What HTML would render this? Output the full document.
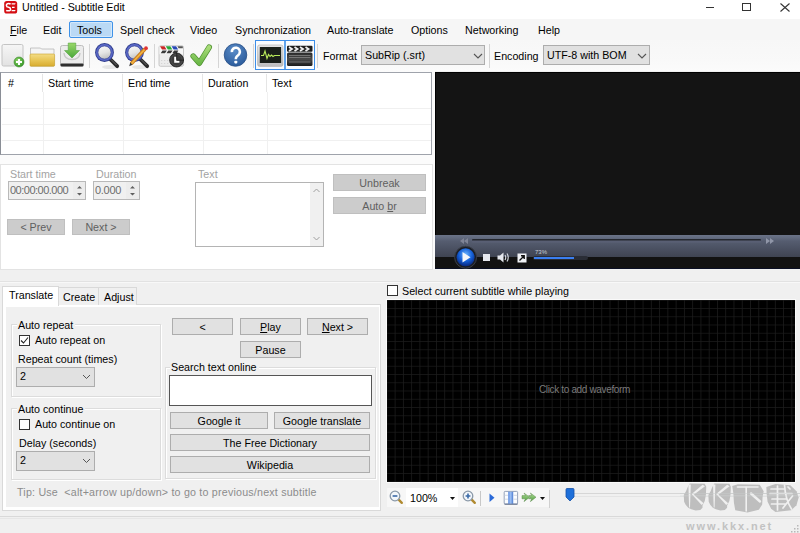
<!DOCTYPE html>
<html><head><meta charset="utf-8">
<style>
*{box-sizing:border-box;margin:0;padding:0}
html,body{width:800px;height:533px;overflow:hidden;background:#f0f0f0;font-family:"Liberation Sans",sans-serif;font-size:10.7px;color:#000}
.a{position:absolute}
.t{position:absolute;white-space:nowrap;line-height:12px}
.btn{position:absolute;background:#e1e1e1;border:1px solid #adadad;text-align:center;line-height:16px;white-space:nowrap}
.dbtn{position:absolute;background:#cccccc;border:1px solid #bfbfbf;text-align:center;color:#5f5f5f;line-height:15px;white-space:nowrap}
.grp{position:absolute;border:1px solid #dcdcdc;box-shadow:inset 1px 1px 0 #fff,1px 1px 0 #fff}
.gt{position:absolute;background:#f0f0f0;padding:0 2px 0 1px;white-space:nowrap;line-height:12px}
.sep{position:absolute;width:1px;background:#d5d5d5}
.cb{position:absolute;width:11px;height:11px;border:1px solid #333;background:#fff}
.combo{position:absolute;background:#e1e1e1;border:1px solid #adadad;line-height:17px;padding-left:3px;white-space:nowrap}
u{text-decoration:underline}
</style></head><body>
<!-- title bar -->
<div class="a" style="left:0;top:0;width:800px;height:19px;background:#fff"></div>
<svg class="a" style="left:0;top:0" width="20" height="16"><rect x="4.2" y="1" width="13" height="12.6" rx="2.6" fill="#d50f14"/><path d="M10.6 4.2Q10 3.5 8.6 3.5Q6.4 3.5 6.4 5.4Q6.4 7 8.5 7.3Q10.6 7.6 10.6 9.2Q10.6 10.8 8.2 10.8Q6.8 10.8 6.2 10.4" stroke="#fff" stroke-width="1.5" fill="none"/><path d="M11.6 3.3H15.6L15 4.5H11.6Z M12 6.7H14.6V7.9H12Z M11.6 10H15.6L15 11.2H11.6Z" fill="#fff"/></svg>
<div class="t" style="left:22px;top:1px">Untitled - Subtitle Edit</div>
<div class="a" style="left:706px;top:7px;width:8px;height:1px;background:#333"></div>
<div class="a" style="left:742px;top:3px;width:9px;height:8px;border:1px solid #333"></div>
<svg class="a" style="left:780px;top:3px" width="10" height="9"><path d="M0.5 0.5L9.5 8.5M9.5 0.5L0.5 8.5" stroke="#333" stroke-width="1.1"/></svg>

<!-- menu bar -->
<div class="a" style="left:0;top:19px;width:800px;height:21px;background:#f6f6f6"></div>
<div class="a" style="left:69px;top:21px;width:44px;height:17px;background:#bad9f5;border:1px solid #3f92e8;border-radius:2px;box-shadow:inset 0 0 0 1px #d4e8fa"></div>
<div class="t" style="left:10px;top:24px"><u>F</u>ile</div>
<div class="t" style="left:43px;top:24px">Edit</div>
<div class="t" style="left:77px;top:24px">Tools</div>
<div class="t" style="left:120px;top:24px">Spell check</div>
<div class="t" style="left:190px;top:24px">Video</div>
<div class="t" style="left:235px;top:24px">Synchronization</div>
<div class="t" style="left:327px;top:24px">Auto-translate</div>
<div class="t" style="left:411px;top:24px">Options</div>
<div class="t" style="left:465px;top:24px">Networking</div>
<div class="t" style="left:538px;top:24px">Help</div>

<!-- toolbar -->
<div class="a" style="left:0;top:40px;width:800px;height:31px;background:linear-gradient(#f7f7f7,#f9f9f9 70%,#fbfbfb)"></div>
<div class="a" style="left:0;top:71px;width:435px;height:198px;background:#fbfbfb"></div>
<div id="icons">
<svg class="a" style="left:0;top:40px" width="320" height="31">
<defs>
<linearGradient id="lens" x1="0" y1="0" x2="0.3" y2="1"><stop offset="0" stop-color="#fafafa"/><stop offset="0.6" stop-color="#e4e4e4"/><stop offset="1" stop-color="#c4c4c4"/></linearGradient>
<linearGradient id="pg" x1="0" y1="0" x2="0" y2="1"><stop offset="0" stop-color="#f6f6f6"/><stop offset="1" stop-color="#e2e2e2"/></linearGradient>
<radialGradient id="gc" cx="40%" cy="35%" r="65%"><stop offset="0" stop-color="#8ed46a"/><stop offset="1" stop-color="#3a9a2a"/></radialGradient>
<linearGradient id="fy" x1="0" y1="0" x2="0" y2="1"><stop offset="0" stop-color="#f3dc86"/><stop offset="0.5" stop-color="#e8c656"/><stop offset="1" stop-color="#d8ac30"/></linearGradient>
<linearGradient id="ga" x1="0" y1="0" x2="0" y2="1"><stop offset="0" stop-color="#9ad86a"/><stop offset="1" stop-color="#4aa83a"/></linearGradient>
<linearGradient id="gk" x1="0" y1="0" x2="0" y2="1"><stop offset="0" stop-color="#a8dc78"/><stop offset="1" stop-color="#6cb848"/></linearGradient>
<radialGradient id="hb" cx="45%" cy="30%" r="70%"><stop offset="0" stop-color="#5a8cc8"/><stop offset="1" stop-color="#2c5c9c"/></radialGradient>
<linearGradient id="mf" x1="0" y1="0" x2="0" y2="1"><stop offset="0" stop-color="#e6e6e6"/><stop offset="1" stop-color="#bdbdbd"/></linearGradient>
<linearGradient id="cb2" x1="0" y1="0" x2="0" y2="1"><stop offset="0" stop-color="#2a2a2a"/><stop offset="0.5" stop-color="#4a4a4a"/><stop offset="1" stop-color="#1a1a1a"/></linearGradient>
</defs>
<!-- new -->
<rect x="2" y="4.5" width="21" height="21.5" rx="1.5" fill="url(#pg)" stroke="#c4c4c4"/>
<circle cx="19" cy="22" r="5" fill="url(#gc)" stroke="#3a8a2a" stroke-width="0.6"/>
<path d="M19 19V25M16 22H22" stroke="#fff" stroke-width="2"/>
<!-- open -->
<path d="M30.5 26V8H40.5L41.5 9H54V26Z" fill="#f4f4f4" stroke="#b8b8b8" stroke-width="0.8"/>
<rect x="30" y="14" width="24.6" height="12.2" rx="1" fill="url(#fy)" stroke="#c9a22a" stroke-width="0.6"/>
<!-- save -->
<rect x="60.5" y="5.5" width="23" height="20.5" rx="2" fill="#ececec" stroke="#bdbdbd"/>
<path d="M64 13Q64.5 19.5 72 19.5Q79.5 19.5 80 13" stroke="#c8c8c8" stroke-width="1.5" fill="none"/>
<rect x="60.5" y="23.5" width="23" height="3" rx="1" fill="#2f2f2f"/>
<path d="M68.2 3H75.8V10.5H79.5L72 18L64.5 10.5H68.2Z" fill="url(#ga)" stroke="#4a9a3a" stroke-width="0.5"/>
<!-- find -->
<ellipse cx="110" cy="27" rx="8" ry="2" fill="#000" opacity="0.08"/>
<path d="M110.5 19.5L117.2 26.2" stroke="#2a2a2a" stroke-width="3.8" stroke-linecap="round"/>
<path d="M111 19.5L116.5 25" stroke="#6a6a6a" stroke-width="1"/>
<circle cx="104.5" cy="12.5" r="9.4" fill="#2e3c8c"/>
<circle cx="104.5" cy="12.5" r="8.5" fill="#5b69c9"/>
<circle cx="104.5" cy="12.5" r="6.6" fill="url(#lens)" stroke="#3a4898" stroke-width="0.8"/>
<!-- replace -->
<ellipse cx="140" cy="27" rx="8" ry="2" fill="#000" opacity="0.08"/>
<path d="M140.5 19.5L147.2 26.2" stroke="#2a2a2a" stroke-width="3.8" stroke-linecap="round"/>
<path d="M141 19.5L146.5 25" stroke="#6a6a6a" stroke-width="1"/>
<circle cx="134.5" cy="12.5" r="9.4" fill="#2e3c8c"/>
<circle cx="134.5" cy="12.5" r="8.5" fill="#5b69c9"/>
<circle cx="134.5" cy="12.5" r="6.6" fill="url(#lens)" stroke="#3a4898" stroke-width="0.8"/>
<path d="M131.2 23.8L145 9" stroke="#c87818" stroke-width="3.6"/>
<path d="M131.2 23.8L145 9" stroke="#f2b443" stroke-width="1.8"/>
<path d="M129.2 26.2L130.2 22.4L132.6 24.8Z" fill="#3a3a3a"/>
<circle cx="146" cy="8.2" r="1.9" fill="#e03434"/>
<!-- clapper clock -->
<rect x="159" y="5.8" width="24.5" height="20.5" rx="1.5" fill="#ececec" stroke="#bdbdbd" stroke-width="0.8"/>
<rect x="159.5" y="6.2" width="23.5" height="8" fill="#f8f8f8"/>
<path d="M160 6.3H164.5L166.5 9.4H162Z" fill="#c82828"/>
<path d="M165.8 6.3H170.3L172.3 9.4H167.8Z" fill="#28a838"/>
<path d="M171.6 6.3H176.1L178.1 9.4H173.6Z" fill="#2848b8"/>
<path d="M177.4 6.3H182.8V8.2H178.6Z" fill="#555"/>
<path d="M162.5 10.6H166.8L165 13.2H160.7Z M168.3 10.6H172.6L170.8 13.2H166.5Z M174.1 10.6H178.4L176.6 13.2H172.3Z" fill="#3a3a3a"/>
<path d="M161 20.5H173M161 23.5H172" stroke="#cfcfcf" stroke-width="0.8" stroke-dasharray="1.2 1.8"/>
<circle cx="176.6" cy="20" r="7" fill="#3c3c3c" stroke="#222" stroke-width="0.8"/>
<circle cx="176.6" cy="20" r="5.6" fill="none" stroke="#555" stroke-width="0.6"/>
<path d="M175.2 16.8V21.8H179.4" stroke="#fff" stroke-width="2" fill="none"/>
<path d="M176.8 12.5V19.5M177 20.2H184" stroke="#1a1a1a" stroke-width="0.7"/>
<!-- check -->
<path d="M193.2 16.2L199.3 23.2L209.2 7.2" stroke="#4e9030" stroke-width="5.6" stroke-linecap="round" stroke-linejoin="round" fill="none"/>
<path d="M193.2 16.2L199.3 23.2L209.2 7.2" stroke="url(#gk)" stroke-width="4.2" stroke-linecap="round" stroke-linejoin="round" fill="none"/>
<!-- help -->
<circle cx="235.5" cy="15" r="11.3" fill="url(#hb)" stroke="#2a5088" stroke-width="0.8"/>
<path d="M231.9 12.2A4 4 0 1 1 239.4 13.6Q238.6 15 237 16.2Q235.8 17.2 235.8 19.3" stroke="#fff" stroke-width="2.6" fill="none"/><rect x="234.3" y="20.8" width="3" height="2.6" rx="0.8" fill="#fff"/>
<!-- waveform/video buttons -->
<rect x="255.5" y="0.5" width="59" height="29" fill="#fafcfe" stroke="#3d8ee8"/>
<path d="M285 1V29" stroke="#3d8ee8" stroke-width="1.6"/>
<rect x="257.5" y="5" width="25.5" height="21.4" rx="2" fill="url(#mf)" stroke="#b0b0b0" stroke-width="0.6"/>
<rect x="259.8" y="7" width="21.3" height="16" fill="#1a201a"/>
<path d="M261 15.5H263.5L265 11L267 18.5L268.5 14.5L270 16.5L271.5 15L273 16.5L274.5 15.5H280" stroke="#b8ea5a" stroke-width="1.1" fill="none"/>
<rect x="287" y="12.5" width="25.5" height="13.5" rx="1.5" fill="url(#cb2)"/>
<path d="M289 15.5H310.5M289 17.5H310.5M289 22H310.5" stroke="#9a9a9a" stroke-width="0.6"/>
<rect x="287" y="5.8" width="25.5" height="6" rx="1" fill="#1e1e1e"/>
<path d="M289 7L292 9L289 11 M294.5 7L297.5 9L294.5 11 M300 7L303 9L300 11 M305.5 7L308.5 9L305.5 11" stroke="#f0f0f0" stroke-width="1.8" fill="none"/>
</svg>
</div>
<div class="sep" style="left:89px;top:44px;height:24px"></div>
<div class="sep" style="left:154px;top:44px;height:24px"></div>
<div class="sep" style="left:218px;top:44px;height:24px"></div>
<div class="sep" style="left:253px;top:44px;height:24px"></div>
<div class="sep" style="left:317px;top:44px;height:24px"></div>
<div class="sep" style="left:489px;top:44px;height:24px"></div>
<div class="t" style="left:323px;top:50px">Format</div>
<div class="combo" style="left:361px;top:45px;width:124px;height:20px;line-height:19px">SubRip (.srt)</div>
<svg class="a" style="left:473px;top:53px" width="10" height="6"><path d="M1 1L5 5L9 1" stroke="#555" fill="none" stroke-width="1.1"/></svg>
<div class="t" style="left:494px;top:50px">Encoding</div>
<div class="combo" style="left:543px;top:45px;width:107px;height:20px;line-height:19px">UTF-8 with BOM</div>
<svg class="a" style="left:637px;top:53px" width="10" height="6"><path d="M1 1L5 5L9 1" stroke="#555" fill="none" stroke-width="1.1"/></svg>

<!-- list view -->
<div class="a" style="left:0;top:72px;width:432px;height:83px;background:#fff;border:1px solid #9fa3ab;border-left:1px solid #8a8e96"></div>
<div class="a" style="left:42px;top:74px;width:1px;height:18px;background:#e5e5e5"></div>
<div class="a" style="left:122px;top:74px;width:1px;height:18px;background:#e5e5e5"></div>
<div class="a" style="left:202px;top:74px;width:1px;height:18px;background:#e5e5e5"></div>
<div class="a" style="left:266px;top:74px;width:1px;height:18px;background:#e5e5e5"></div>
<div class="a" style="left:43px;top:92px;width:1px;height:62px;background:#f0f0f0"></div>
<div class="a" style="left:123px;top:92px;width:1px;height:62px;background:#f0f0f0"></div>
<div class="a" style="left:203px;top:92px;width:1px;height:62px;background:#f0f0f0"></div>
<div class="a" style="left:267px;top:92px;width:1px;height:62px;background:#f0f0f0"></div>
<div class="a" style="left:2px;top:108px;width:429px;height:1px;background:#f0f0f0"></div>
<div class="a" style="left:2px;top:124px;width:429px;height:1px;background:#f0f0f0"></div>
<div class="a" style="left:2px;top:140px;width:429px;height:1px;background:#f0f0f0"></div>
<div class="t" style="left:8px;top:77px">#</div>
<div class="t" style="left:48px;top:77px">Start time</div>
<div class="t" style="left:128px;top:77px">End time</div>
<div class="t" style="left:208px;top:77px">Duration</div>
<div class="t" style="left:272px;top:77px">Text</div>

<!-- edit panel -->
<div class="a" style="left:0;top:164px;width:433px;height:106px;background:#fff;border:1px solid #e3e3e3"></div>
<div class="t" style="left:10px;top:168px;color:#a3a3a3">Start time</div>
<div class="t" style="left:96px;top:168px;color:#a3a3a3">Duration</div>
<div class="t" style="left:198px;top:168px;color:#a3a3a3">Text</div>
<div class="a" style="left:8px;top:181px;width:78px;height:19px;background:#f0f0f0;border:1px solid #b9b9b9"></div>
<div class="t" style="left:10px;top:184px;color:#6d6d6d;font-size:11px;letter-spacing:-0.5px">00:00:00.000</div>
<div class="a" style="left:73px;top:182px;width:12px;height:17px;background:#ececec"></div>
<svg class="a" style="left:75px;top:185px" width="9" height="12"><path d="M2 3.5L4.5 1L7 3.5Z M2 8L4.5 10.5L7 8Z" fill="#606060"/></svg>
<div class="a" style="left:93px;top:181px;width:47px;height:19px;background:#f0f0f0;border:1px solid #b9b9b9"></div>
<div class="t" style="left:95px;top:184px;color:#6d6d6d;font-size:11px;letter-spacing:-0.3px">0.000</div>
<div class="a" style="left:126px;top:182px;width:13px;height:17px;background:#ececec"></div>
<svg class="a" style="left:128px;top:185px" width="9" height="12"><path d="M2 3.5L4.5 1L7 3.5Z M2 8L4.5 10.5L7 8Z" fill="#606060"/></svg>
<div class="dbtn" style="left:7px;top:219px;width:58px;height:16px">&lt; Prev</div>
<div class="dbtn" style="left:72px;top:219px;width:58px;height:16px">Next &gt;</div>
<div class="a" style="left:195px;top:182px;width:129px;height:65px;background:#fff;border:1px solid #b4b4b4"></div>
<div class="a" style="left:310px;top:183px;width:13px;height:63px;background:#f0f0f0"></div>
<svg class="a" style="left:311px;top:186px" width="11" height="58"><path d="M2.5 6L5.5 3L8.5 6 M2.5 51L5.5 54L8.5 51" stroke="#a0a0a0" fill="none" stroke-width="1"/></svg>
<div class="dbtn" style="left:333px;top:174px;width:93px;height:17px;line-height:17px">Unbreak</div>
<div class="dbtn" style="left:333px;top:197px;width:93px;height:17px;line-height:17px">Auto <u>b</u>r</div>

<!-- video -->
<div class="a" style="left:435px;top:72px;width:365px;height:197px;background:#141414;border-top:1px solid #000;border-left:1px solid #000"></div>
<div class="a" style="left:435px;top:235px;width:365px;height:22px;background:linear-gradient(#6b7388 0px,#616a7e 3px,#565d70 6px,#4a5061 14px,#3f4452 22px)"></div>
<div class="a" style="left:435px;top:257px;width:365px;height:11px;background:#121212"></div>
<div class="a" style="left:435px;top:268px;width:365px;height:1px;background:#0a0f24"></div>
<div class="a" style="left:472px;top:239px;width:289px;height:4px;background:linear-gradient(#25282f 0,#25282f 1px,#5a6075 2px,#565d70 4px);border-radius:1px"></div>
<svg class="a" style="left:459px;top:238px" width="10" height="6"><path d="M5 0L1 3L5 6Z M9 0L5 3L9 6Z" fill="#7f8496"/></svg>
<svg class="a" style="left:765px;top:238px" width="10" height="6"><path d="M1 0L5 3L1 6Z M5 0L9 3L5 6Z" fill="#9096a8"/></svg>
<svg class="a" style="left:453px;top:245px" width="26" height="26"><defs><radialGradient id="pb" cx="50%" cy="35%" r="60%"><stop offset="0" stop-color="#6fb6ff"/><stop offset="0.6" stop-color="#1560d8"/><stop offset="1" stop-color="#0a2f8c"/></radialGradient></defs><circle cx="12.6" cy="12.3" r="11" fill="#1b1e26" stroke="#3a3e48" stroke-width="1"/><circle cx="12.6" cy="12.3" r="9" fill="url(#pb)"/><path d="M9.5 7L17.5 12.3L9.5 17.6Z" fill="#f4f6fa"/></svg>
<div class="a" style="left:483px;top:254px;width:7px;height:7px;background:#e6e8ee"></div>
<svg class="a" style="left:497px;top:252px" width="14" height="11"><path d="M0.5 3.5H3L6.5 0.5V10.5L3 7.5H0.5Z" fill="#e6e8ee"/><path d="M8 3Q9.5 5.5 8 8 M10 1.5Q12.5 5.5 10 9.5" stroke="#d0d4dc" fill="none" stroke-width="1.2"/></svg>
<svg class="a" style="left:517px;top:253px" width="10" height="10"><rect x="0.5" y="0.5" width="9" height="9" fill="#f0f2f6"/><path d="M2.5 7.5L7 3 M4 2.8H7.2V6" stroke="#111" stroke-width="1.4" fill="none"/></svg>
<div class="t" style="left:535px;top:248.5px;font-size:6px;color:#c8ccd6;line-height:7px">73%</div>
<div class="a" style="left:533px;top:256px;width:55px;height:4px;background:#2a2d36;border-radius:2px"></div>
<div class="a" style="left:534px;top:257px;width:40px;height:2px;background:#3a7ef0"></div>

<!-- splitter line -->
<div class="a" style="left:0;top:281px;width:800px;height:1px;background:#e2e2e2"></div>
<div class="a" style="left:0;top:282px;width:800px;height:1px;background:#f8f8f8"></div>

<!-- tabs -->
<div class="a" style="left:2px;top:304px;width:379px;height:207px;border:1px solid #d9d9d9;background:#fff"></div>
<div class="a" style="left:6px;top:307px;width:373px;height:200px;background:#f0f0f0"></div>
<div class="a" style="left:58px;top:287px;width:41px;height:18px;border:1px solid #d9d9d9;border-bottom:none;background:#f0f0f0"></div>
<div class="a" style="left:98px;top:287px;width:39px;height:18px;border:1px solid #d9d9d9;border-bottom:none;background:#f0f0f0"></div>
<div class="a" style="left:2px;top:286px;width:57px;height:20px;border:1px solid #d9d9d9;border-bottom:none;background:#fff"></div>
<div class="t" style="left:9px;top:289px">Translate</div>
<div class="t" style="left:63px;top:291px">Create</div>
<div class="t" style="left:104px;top:291px">Adjust</div>
<div class="grp" style="left:11px;top:324px;width:150px;height:73px"></div>
<div class="gt" style="left:17px;top:319px">Auto repeat</div>
<div class="cb" style="left:19px;top:335px;border-color:#333"></div>
<svg class="a" style="left:20px;top:336px" width="9" height="9"><path d="M1 4.5L3.5 7L8 1.5" stroke="#222" stroke-width="1.1" fill="none"/></svg>
<div class="t" style="left:35px;top:334px">Auto repeat on</div>
<div class="t" style="left:18px;top:353px">Repeat count (times)</div>
<div class="combo" style="left:16px;top:367px;width:79px;height:20px">2</div>
<svg class="a" style="left:82px;top:374px" width="9" height="6"><path d="M1 1L4.5 4.5L8 1" stroke="#555" fill="none" stroke-width="1"/></svg>
<div class="grp" style="left:11px;top:408px;width:150px;height:72px"></div>
<div class="gt" style="left:17px;top:403px">Auto continue</div>
<div class="cb" style="left:19px;top:419px"></div>
<div class="t" style="left:35px;top:418px">Auto continue on</div>
<div class="t" style="left:19px;top:437px">Delay (seconds)</div>
<div class="combo" style="left:16px;top:451px;width:79px;height:20px">2</div>
<svg class="a" style="left:82px;top:458px" width="9" height="6"><path d="M1 1L4.5 4.5L8 1" stroke="#555" fill="none" stroke-width="1"/></svg>
<div class="btn" style="left:172px;top:318px;width:61px;height:17px">&lt;</div>
<div class="btn" style="left:240px;top:318px;width:61px;height:17px"><u>P</u>lay</div>
<div class="btn" style="left:307px;top:318px;width:61px;height:17px"><u>N</u>ext &gt;</div>
<div class="btn" style="left:240px;top:341px;width:61px;height:17px">Pause</div>
<div class="grp" style="left:165px;top:367px;width:211px;height:112px"></div>
<div class="gt" style="left:170px;top:361px">Search text online</div>
<div class="a" style="left:169px;top:375px;width:203px;height:31px;background:#fff;border:1px solid #555"></div>
<div class="btn" style="left:170px;top:412px;width:98px;height:17px">Google it</div>
<div class="btn" style="left:274px;top:412px;width:96px;height:17px">Google translate</div>
<div class="btn" style="left:170px;top:434px;width:200px;height:17px">The Free Dictionary</div>
<div class="btn" style="left:170px;top:456px;width:200px;height:17px">Wikipedia</div>
<div class="t" style="left:17px;top:486px;color:#8c8c8c;letter-spacing:0.2px">Tip: Use &nbsp;&lt;alt+arrow up/down&gt; to go to previous/next subtitle</div>

<!-- right waveform -->
<div class="cb" style="left:387px;top:285px"></div>
<div class="t" style="left:402px;top:285px">Select current subtitle while playing</div>
<div class="a" style="left:386px;top:299px;width:410px;height:184px;background:#000;border:1px solid #fafafa"></div>
<svg class="a" style="left:387px;top:300px" width="408" height="182"><defs><pattern id="g" x="0.3" y="0.7" width="8.265" height="8.25" patternUnits="userSpaceOnUse"><path d="M8 0V8.25M0 8H8.265" stroke="#1c1c1c" stroke-width="1" fill="none"/></pattern></defs><rect width="409" height="182" fill="url(#g)"/></svg>
<div class="t" style="left:539px;top:384px;color:#7a7a7a;font-size:10px;letter-spacing:-0.35px">Click to add waveform</div>
<div class="a" style="left:387px;top:488px;width:162px;height:19px;background:#f7f7f7"></div>
<div class="a" style="left:549px;top:490px;width:1px;height:18px;background:#d0d0d0"></div>
<svg class="a" style="left:389px;top:490px" width="15" height="15"><path d="M9.2 9.2L12.8 12.8" stroke="#b08a30" stroke-width="2.4" stroke-linecap="round"/><circle cx="6" cy="6" r="4.8" fill="#f2f6fa" stroke="#8a98a8" stroke-width="1.3"/><path d="M3.6 6H8.4" stroke="#3a6aa8" stroke-width="1.6"/></svg>
<div class="a" style="left:406px;top:488px;width:52px;height:19px;background:#fff"></div>
<div class="t" style="left:410px;top:492px">100%</div>
<svg class="a" style="left:449.5px;top:497px" width="6" height="4"><path d="M0 0H5L2.5 3Z" fill="#111"/></svg>
<svg class="a" style="left:462px;top:490px" width="15" height="15"><path d="M9.2 9.2L12.8 12.8" stroke="#b08a30" stroke-width="2.4" stroke-linecap="round"/><circle cx="6" cy="6" r="4.8" fill="#f2f6fa" stroke="#8a98a8" stroke-width="1.3"/><path d="M3.6 6H8.4M6 3.6V8.4" stroke="#3a6aa8" stroke-width="1.6"/></svg>
<div class="a" style="left:480px;top:491px;width:1px;height:15px;background:#c8c8c8"></div>
<svg class="a" style="left:489px;top:493px" width="7" height="10"><path d="M0.5 0.5L5.5 4.7L0.5 9Z" fill="#2a6ad8"/></svg>
<svg class="a" style="left:503px;top:490px" width="16" height="16"><defs><linearGradient id="fb" x1="0" x2="1"><stop offset="0" stop-color="#5a8ae0"/><stop offset="0.5" stop-color="#9cc0f4"/><stop offset="1" stop-color="#4a7ad0"/></linearGradient></defs><rect x="1.2" y="1.4" width="13.4" height="12.6" rx="1" fill="#fbfdff" stroke="#7a8aa8" stroke-width="0.8"/><rect x="5.2" y="1.8" width="5" height="12" fill="url(#fb)"/><path d="M1.5 5.3H5M1.5 9.2H5M10.4 5.3H14.3M10.4 9.2H14.3" stroke="#c8d0dc" stroke-width="0.8"/><path d="M1.5 14.2H14.6" stroke="#4a5a78" stroke-width="0.8"/></svg>
<svg class="a" style="left:521px;top:492px" width="16" height="11"><defs><linearGradient id="ag" x1="0" y1="0" x2="0" y2="1"><stop offset="0" stop-color="#b4e09a"/><stop offset="1" stop-color="#4a9a3a"/></linearGradient></defs><path d="M1 3.6H4.5L3 1L8.6 5.2L3 9.6L4.5 6.8H1Z" fill="url(#ag)" stroke="#5a8a4a" stroke-width="0.5"/><path d="M7.6 3.6H10.8L9.4 1L15 5.2L9.4 9.6L10.8 6.8H7.6L9.2 5.2Z" fill="url(#ag)" stroke="#5a8a4a" stroke-width="0.5"/></svg>
<svg class="a" style="left:540px;top:497px" width="6" height="4"><path d="M0 0H5L2.5 3Z" fill="#111"/></svg>
<div class="a" style="left:574px;top:493px;width:226px;height:1px;background:#d6d6d6"></div>
<div class="a" style="left:574px;top:496px;width:226px;height:1px;background:#e4e4e4"></div>
<svg class="a" style="left:565px;top:488px" width="10" height="14"><path d="M1 1.5Q1 0.5 2 0.5H8Q9 0.5 9 1.5V9L5 13L1 9Z" fill="#1e6fd9" stroke="#1552a8" stroke-width="0.8"/></svg>

<!-- status line -->
<div class="a" style="left:0;top:516px;width:800px;height:1px;background:#d9d9d9"></div>
<div class="a" style="left:0;top:518px;width:800px;height:1px;background:#e6e6e6"></div>
<svg class="a" style="left:680px;top:480px" width="120" height="53">
<g fill="#bebebe">
<polygon points="9.75,3.38 24.76,3.75 26.26,6.75 25.88,15.00 24.76,21.01 22.51,25.51 22.51,27.76 20.26,30.01 15.75,30.38 11.25,29.26 8.25,27.76 5.63,24.76 4.13,21.76 3.75,15.00 6.00,11.25 7.50,7.50"/>
<polygon points="34.35,3.38 49.36,3.75 50.86,6.75 50.48,15.00 49.36,21.01 47.11,25.51 47.11,27.76 44.86,30.01 40.35,30.38 35.85,29.26 32.85,27.76 30.23,24.76 28.73,21.76 28.35,15.00 30.60,11.25 32.10,7.50"/>
<polygon points="52.19,6.12 57.87,4.37 79.75,4.81 83.68,11.37 82.55,17.50 82.20,24.50 78.87,29.75 67.50,32.55 55.25,30.18 53.94,22.75 53.32,13.12"/>
<polygon points="86.31,7.00 95.49,3.94 110.37,5.25 116.49,11.37 118.68,17.50 116.49,25.37 111.24,30.18 95.49,31.93 91.12,28.87 87.62,21.87 86.75,14.87"/>
</g>
<g fill="#f0f0f0">
<path d="M8.4 4.5L10.8 4.5L10.0 27.5L9.1 27.5Z"/>
<path d="M22.6 4.8L25.0 6.2L13.4 15.0L11.6 14.0Z"/>
<path d="M11.6 14.0L13.4 14.2L23.6 23.2L21.6 25.0Z"/>
<path d="M33.0 4.5L35.4 4.5L34.6 27.5L33.7 27.5Z"/>
<path d="M47.2 4.8L49.6 6.2L38.0 15.0L36.2 14.0Z"/>
<path d="M36.2 14.0L38.0 14.2L48.2 23.2L46.2 25.0Z"/>
</g>
<g stroke="#f0f0f0" fill="none" stroke-linecap="round">
<path d="M57.5 7H78" stroke-width="1.6"/>
<path d="M66.2 7.5L66.2 31" stroke-width="1.6"/>
<path d="M71 13.5L80 21.5" stroke-width="2.4"/>
<path d="M91 9H105M90 13.5H112M92 19H106M91.5 24H106M97.5 6V30M104.5 5Q105.5 20 111.5 29M112.5 16L103 28M108 7L110 9" stroke-width="1.7"/>
</g>
<text x="6" y="50" font-family="Liberation Sans" font-weight="bold" font-size="11" letter-spacing="1.9" fill="#c2c2c2">www.kkx.net</text>
<g fill="#b8b8b8"><rect x="117" y="45" width="1.5" height="1.5"/><rect x="114" y="48" width="1.5" height="1.5"/><rect x="117" y="48" width="1.5" height="1.5"/><rect x="111" y="51" width="1.5" height="1.5"/><rect x="114" y="51" width="1.5" height="1.5"/><rect x="117" y="51" width="1.5" height="1.5"/></g>
<path d="M0 13.5H120" stroke="#c8cccc" stroke-width="0.8" opacity="0.6"/>
<path d="M0 15.8H120" stroke="#d8dcdc" stroke-width="0.8" opacity="0.5"/>
</svg>
</body></html>
